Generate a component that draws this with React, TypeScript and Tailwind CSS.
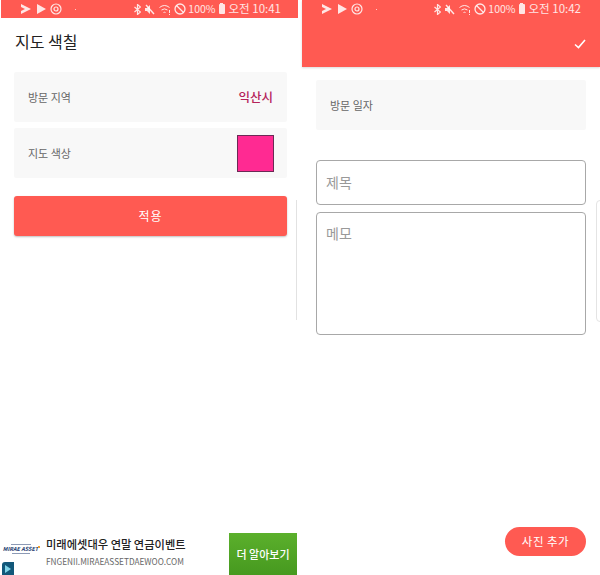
const font = { fontFamily: '"Noto Sans CJK KR", Roboto, sans-serif' };

function StatusBar({ time, right }: { time: string; right: string }) {
  return (
    <div className={`flex h-[18px] items-center justify-between pl-[20px] text-white/85 ${right}`}>
      <div className="flex items-center gap-[6px]">
        <svg width="10" height="10" viewBox="0 0 10 10" fill="currentColor">
          <path d="M0 0l10 5-10 5V7l4-2-4-2z" />
        </svg>
        <svg width="9" height="10" viewBox="0 0 9 10" fill="currentColor">
          <path d="M0 0l9 5-9 5z" />
        </svg>
        <svg className="ml-[-2px]" width="12" height="12" viewBox="0 0 12 12" fill="none" stroke="currentColor" strokeWidth="1.2">
          <circle cx="6" cy="6" r="5" />
          <circle cx="6" cy="6" r="2" />
        </svg>
        <div className="ml-[7px] h-[1px] w-[1px] bg-white/70" />
      </div>
      <div className="flex items-center">
        <svg width="7" height="11" viewBox="0 0 7 11" fill="none" stroke="currentColor" strokeWidth="1.2">
          <path d="M0.500 3l6 5-3 2.500v-10l3 2.500-6 5" />
        </svg>
        <svg className="ml-[4px]" width="10" height="11" viewBox="0 0 10 11" fill="currentColor">
          <path d="M0 4h2l3-3v9L2 7H0z" />
          <path d="M1 1l8 9" stroke="currentColor" strokeWidth="1.400" />
        </svg>
        <svg className="ml-[4px]" width="12" height="11" viewBox="0 0 12 11" fill="none" stroke="currentColor" strokeWidth="1">
          <path d="M0.500 3.500a8 8 0 0 1 10 0M2.500 6a5 5 0 0 1 6 0M4.500 8.500a2 2 0 0 1 2 0" />
          <path d="M10.500 6v3M10.500 10v1" />
        </svg>
        <svg className="ml-[3px]" width="12" height="12" viewBox="0 0 12 12" fill="none" stroke="currentColor" strokeWidth="1.3">
          <circle cx="6" cy="6" r="5" />
          <path d="M2.500 2.500l7 7" />
        </svg>
        <span className="ml-[2px] text-[10.500px] leading-none" style={font}>100%</span>
        <div className="relative ml-[3px] h-[10px] w-[6px] rounded-[1px] bg-current">
          <div className="absolute left-[1.500px] top-[-1px] h-[1px] w-[3px] bg-current" />
        </div>
        <span className="ml-[4px] text-[11.500px] leading-none" style={font}>오전 {time}</span>
      </div>
    </div>
  );
}

function Row({ label, children, className }: { label: string; children?: React.ReactNode; className: string }) {
  return (
    <div className={`flex items-center justify-between rounded-[2px] bg-[#f8f8f8] pl-[14px] ${className}`}>
      <span className="text-[11px] text-[#666]">{label}</span>
      {children}
    </div>
  );
}

export default function App() {
  return (
    <div className="flex h-[575px] w-[600px] overflow-hidden bg-white" style={font}>
      {/* Map colour screen */}
      <section className="relative ml-[1px] flex w-[297px] flex-col">
        <div className="bg-[#ff5a52]">
          <StatusBar time="10:41" right="pr-[17px]" />
        </div>
        <h1 className="ml-[14px] mt-[12px] text-[16px] leading-[22px] text-[#222]">지도 색칠</h1>
        <div className="ml-[13px] mr-[11px] mt-[20px] flex flex-col gap-[6px]">
          <Row label="방문 지역" className="h-[50px] pr-[14px]">
            <span className="text-[12.500px] font-medium text-[#b5235a]">익산시</span>
          </Row>
          <Row label="지도 색상" className="h-[50px] pr-[13px]">
            <div className="h-[37px] w-[37px] border border-[#6b2a55] bg-[#ff2a92]" />
          </Row>
        </div>
        <button className="ml-[13px] mr-[11px] mt-[18px] h-[40px] rounded-[3px] bg-[#ff5a52] text-[12px] tracking-[1px] text-white shadow-[0_1px_2px_rgba(0,0,0,0.25)]">
          적용
        </button>

        {/* Ad banner */}
        <div className="mt-auto flex h-[42px] items-stretch pr-[1px]">
          <div className="relative w-[45px] shrink-0">
            <div className="absolute left-[2px] top-[11px] flex w-[35px] flex-col items-center gap-[1px]">
              <div className="h-[1px] w-[20px] bg-[#8c9ab5]" />
              <span className="whitespace-nowrap text-[5.500px] font-bold italic leading-[6px] text-[#1d3a6e]">MIRAE ASSET</span>
              <div className="h-[1px] w-[18px] bg-[#8c9ab5]" />
            </div>
            <div className="absolute left-[37px] top-[13px] h-[2px] w-[2px] bg-[#f0a030]" />
            <div className="absolute bottom-0 left-[1px] flex h-[13px] w-[12px] items-center justify-center rounded-tl-[3px] bg-[#12587a]">
              <svg width="6" height="8" viewBox="0 0 6 8" fill="#7fd4e8">
                <path d="M0 0l6 4-6 4z" />
              </svg>
            </div>
          </div>
          <div className="flex min-w-0 flex-1 flex-col pt-[3px]">
            <span className="whitespace-nowrap text-[11.250px] font-medium leading-[17px] text-[#222]">미래에셋대우 연말 연금이벤트</span>
            <span className="mt-[2px] whitespace-nowrap text-[8.250px] leading-[12px] text-[#666]">FNGENII.MIRAEASSETDAEWOO.COM</span>
          </div>
          <div className="flex w-[68px] shrink-0 items-center justify-center bg-gradient-to-b from-[#5bb02c] to-[#46991f] text-[11px] font-medium text-white">
            더 알아보기
          </div>
        </div>

        {/* edge of the next page */}
        <div className="absolute left-[295px] top-[200px] h-[120px] w-[1px] bg-[#e2e2e2]" />
      </section>

      {/* Visit record screen */}
      <section className="relative ml-[4px] flex w-[298px] flex-col">
        <div className="h-[67px] bg-[#ff5a52] shadow-[0_1px_2px_rgba(0,0,0,0.15)]">
          <StatusBar time="10:42" right="pr-[19px]" />
          <div className="mt-[21px] flex justify-end pr-[14px]">
            <svg width="12" height="10" viewBox="0 0 12 10" fill="none" stroke="white" strokeWidth="1.600">
              <path d="M1 5.500l3.500 3L11 1" />
            </svg>
          </div>
        </div>
        <div className="mx-[14px] mt-[13px] flex flex-col">
          <Row label="방문 일자" className="h-[50px]" />
          <input
            placeholder="제목"
            className="mt-[30px] h-[45px] rounded-[4px] border border-[#a8a8a8] bg-white px-[9px] pb-[2px] text-[14px] outline-none placeholder:text-[#999]"
          />
          <textarea
            placeholder="메모"
            className="mt-[7px] h-[123px] resize-none rounded-[4px] border border-[#a8a8a8] bg-white px-[9px] py-[10px] text-[14px] outline-none placeholder:text-[#999]"
          />
        </div>
        <button className="absolute bottom-[19px] right-[14px] h-[29px] w-[81px] rounded-full bg-[#ff5a52] text-[11.500px] tracking-[0.5px] text-white">
          사진 추가
        </button>

        {/* edge of the next page */}
        <div className="absolute left-[294px] top-[200px] h-[122px] w-[8px] rounded-l-[4px] border border-[#e4e4e4]" />
      </section>
    </div>
  );
}
